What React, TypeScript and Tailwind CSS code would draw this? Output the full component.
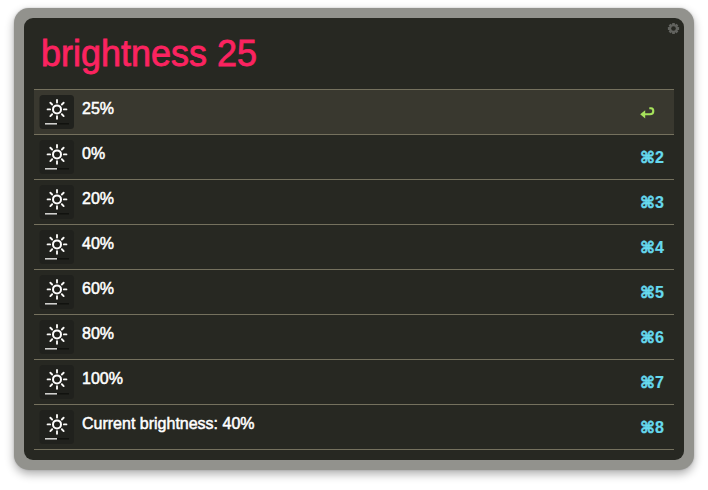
const rows = [
  { title: "25%", key: "" },
  { title: "0%", key: "2" },
  { title: "20%", key: "3" },
  { title: "40%", key: "4" },
  { title: "60%", key: "5" },
  { title: "80%", key: "6" },
  { title: "100%", key: "7" },
  { title: "Current brightness: 40%", key: "8" },
];

const rays = [0, 45, 90, 135, 180, 225, 270, 315];
const teeth = [0, 45, 90, 135];

function BrightnessIcon() {
  return (
    <svg className="mt-[5px] ml-[5px] block h-[35px] w-[36px] shrink-0" viewBox="0 0 36 35">
      <rect x="0.5" y="0" width="34.5" height="34" rx="3.5" fill="#20211d" />
      <circle cx="18" cy="14.4" r="4" fill="none" stroke="#fff" strokeWidth="2" />
      {rays.map((a) => (
        <line
          key={a}
          x1="18"
          y1="7.5"
          x2="18"
          y2="5"
          stroke="#f8f8f6"
          strokeWidth="1.9"
          strokeLinecap="round"
          transform={`rotate(${a} 18 14.4)`}
        />
      ))}
      <rect x="6" y="28" width="24" height="1.5" fill="#11120f" />
      <rect x="6" y="28" width="12" height="1.6" fill="#d0d0cd" />
    </svg>
  );
}

function GearIcon() {
  return (
    <svg className="absolute top-[4px] right-[4px] h-[13px] w-[13px]" viewBox="0 0 13 13">
      {teeth.map((a) => (
        <rect key={a} x="5.1" y="0.9" width="2.8" height="11.2" rx="0.5" fill="#62635f" transform={`rotate(${a} 6.5 6.5)`} />
      ))}
      <circle cx="6.5" cy="6.5" r="4.3" fill="#62635f" />
      <circle cx="6.5" cy="6.5" r="2.3" fill="#272822" />
    </svg>
  );
}

function ReturnIcon() {
  return (
    <svg className="mt-[17px] mr-[19px] block h-[12px] w-[15px]" viewBox="0 0 15 12">
      <path d="M9.3 1.2 H11 Q13.3 1.4 13.3 4 Q13.3 7.3 10 7.3 H4" fill="none" stroke="#a6e25b" strokeWidth="2.1" />
      <path d="M0.2 7.3 L5.2 3.2 V11.4 Z" fill="#a6e25b" />
    </svg>
  );
}

export default function App() {
  return (
    <div className="h-[490px] w-[708px] overflow-hidden bg-white pt-[8px] pl-[14px] font-['Liberation_Sans',Arial,sans-serif]">
      <div className="h-[462px] w-[680px] rounded-[15px] bg-[#92928d] p-[10px] shadow-[0_4px_10px_rgba(0,0,0,0.32),0_0_2px_rgba(0,0,0,0.2)]">
        <div className="relative h-[442px] w-[660px] rounded-[9px] bg-[#272822] px-[10px]">
          <GearIcon />
          <div className="h-[71px] pt-[15px] pl-[7px] text-[36px] leading-[42px] text-[#fb2360] [-webkit-text-stroke:0.8px_#fb2360]">
            brightness 25
          </div>
          <div className="border-t border-[#75715e]">
            {rows.map((row, i) => (
              <div
                key={row.title}
                className={`flex h-[45px] border-b border-[#75715e] ${i === 0 ? "bg-[#39382f]" : ""}`}
              >
                <BrightnessIcon />
                <span className="mt-[9px] ml-[7px] flex-1 text-[16px] leading-[20px] text-white [-webkit-text-stroke:0.5px_#ffffff]">
                  {row.title}
                </span>
                {row.key ? (
                  <span className="mt-[13px] mr-[10px] flex text-[16px] leading-[20px] font-bold text-[#66d9ef]">
                    <span className="w-[15px] font-['DejaVu_Sans',sans-serif] text-[16px] [-webkit-text-stroke:0.6px_#66d9ef]">⌘</span>
                    <span className="[-webkit-text-stroke:0.2px_#66d9ef]">{row.key}</span>
                  </span>
                ) : (
                  <ReturnIcon />
                )}
              </div>
            ))}
          </div>
        </div>
      </div>
    </div>
  );
}
